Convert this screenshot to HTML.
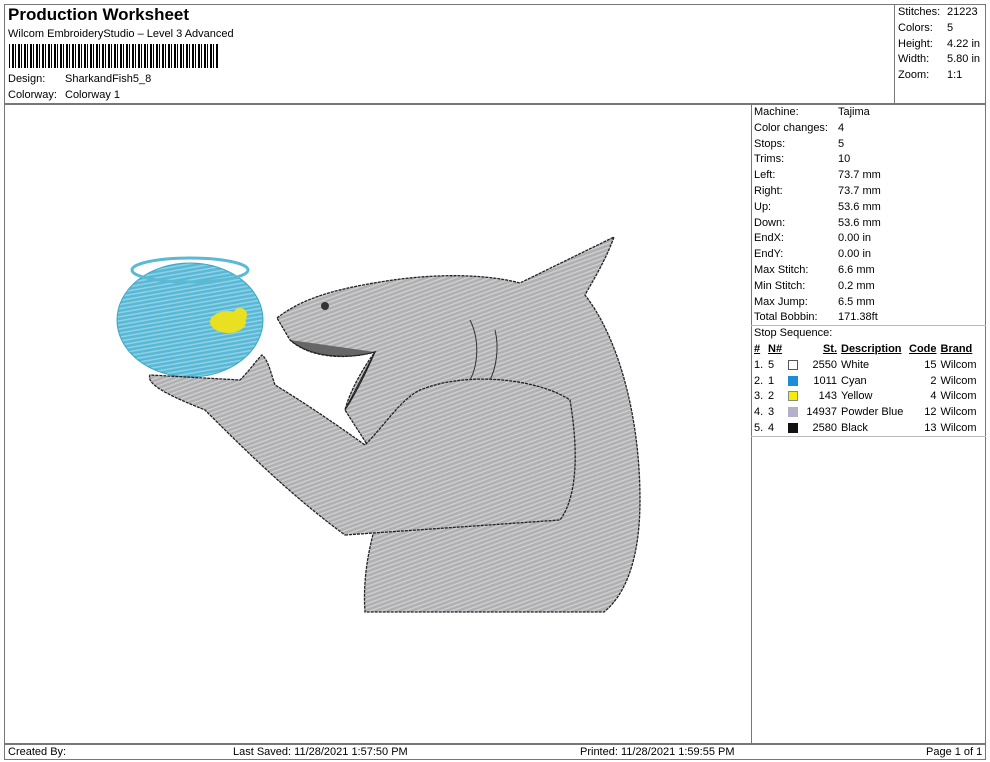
<!DOCTYPE html>
<html><head><meta charset="utf-8"><style>
*{margin:0;padding:0;box-sizing:border-box}
body{width:990px;height:762px;background:#fff;font-family:"Liberation Sans",Arial,sans-serif;font-size:11px;color:#000;position:relative;overflow:hidden}
.a{position:absolute;white-space:nowrap}
.ln{position:absolute;background:#777}
.bar{position:absolute;left:9px;top:44px;width:210px;height:24px;background:repeating-linear-gradient(90deg,#000 0 1px,#fff 1px 3px,#000 3px 5px,#fff 5px 6px,#000 6px 7px,#fff 7px 9px,#000 9px 11px,#fff 11px 12px)}
table{border-collapse:collapse}
td{padding:0;height:15.8px;line-height:15.8px}
</style></head><body>
<div class="ln" style="left:4px;top:4px;width:982px;height:1px"></div>
<div class="ln" style="left:4px;top:4px;width:1px;height:756px"></div>
<div class="ln" style="left:985px;top:4px;width:1px;height:756px"></div>
<div class="ln" style="left:4px;top:759px;width:982px;height:1px"></div>
<div class="ln" style="left:4px;top:103px;width:982px;height:2px"></div>
<div class="ln" style="left:894px;top:4px;width:1px;height:100px"></div>
<div class="ln" style="left:751px;top:104px;width:1px;height:640px"></div>
<div class="ln" style="left:751px;top:325px;width:235px;height:1px;background:#bbb"></div>
<div class="ln" style="left:751px;top:436px;width:235px;height:1px;background:#bbb"></div>
<div class="ln" style="left:4px;top:743px;width:982px;height:2px"></div>

<div class="a" style="left:8px;top:5px;font-size:17px;font-weight:bold">Production Worksheet</div>
<div class="a" style="left:8px;top:28px">Wilcom EmbroideryStudio – Level 3 Advanced</div>
<div class="bar"></div>
<div class="a" style="left:8px;top:73px">Design:</div><div class="a" style="left:65px;top:73px">SharkandFish5_8</div>
<div class="a" style="left:8px;top:89px">Colorway:</div><div class="a" style="left:65px;top:89px">Colorway 1</div>

<table class="a" style="left:898px;top:5px">
<tr><td style="width:49px">Stitches:</td><td>21223</td></tr>
<tr><td>Colors:</td><td>5</td></tr>
<tr><td>Height:</td><td>4.22 in</td></tr>
<tr><td>Width:</td><td>5.80 in</td></tr>
<tr><td>Zoom:</td><td>1:1</td></tr>
</table>

<table class="a" style="left:754px;top:105px">
<tr><td style="width:84px">Machine:</td><td>Tajima</td></tr>
<tr><td>Color changes:</td><td>4</td></tr>
<tr><td>Stops:</td><td>5</td></tr>
<tr><td>Trims:</td><td>10</td></tr>
<tr><td>Left:</td><td>73.7 mm</td></tr>
<tr><td>Right:</td><td>73.7 mm</td></tr>
<tr><td>Up:</td><td>53.6 mm</td></tr>
<tr><td>Down:</td><td>53.6 mm</td></tr>
<tr><td>EndX:</td><td>0.00 in</td></tr>
<tr><td>EndY:</td><td>0.00 in</td></tr>
<tr><td>Max Stitch:</td><td>6.6 mm</td></tr>
<tr><td>Min Stitch:</td><td>0.2 mm</td></tr>
<tr><td>Max Jump:</td><td>6.5 mm</td></tr>
<tr><td>Total Bobbin:</td><td>171.38ft</td></tr>
<tr><td>Stop Sequence:</td><td></td></tr>
</table>

<table class="a" style="left:754px;top:342px">
<tr style="font-weight:bold;text-decoration:underline"><td style="width:14px">#</td><td style="width:20px">N#</td><td style="width:14px"></td><td style="width:35px;text-align:right">St.</td><td style="width:72px;padding-left:4px">Description</td><td style="width:27px;text-align:right">Code</td><td style="padding-left:4px">Brand</td></tr>
<tr><td>1.</td><td>5</td><td><span style="display:inline-block;width:10px;height:10px;border:1px solid #555;background:#fff;vertical-align:middle"></span></td><td style="text-align:right">2550</td><td style="padding-left:4px">White</td><td style="text-align:right">15</td><td style="padding-left:4px">Wilcom</td></tr>
<tr><td>2.</td><td>1</td><td><span style="display:inline-block;width:10px;height:10px;background:#1a8fd6;vertical-align:middle"></span></td><td style="text-align:right">1011</td><td style="padding-left:4px">Cyan</td><td style="text-align:right">2</td><td style="padding-left:4px">Wilcom</td></tr>
<tr><td>3.</td><td>2</td><td><span style="display:inline-block;width:10px;height:10px;background:#f2ef00;border:1px solid #888;vertical-align:middle"></span></td><td style="text-align:right">143</td><td style="padding-left:4px">Yellow</td><td style="text-align:right">4</td><td style="padding-left:4px">Wilcom</td></tr>
<tr><td>4.</td><td>3</td><td><span style="display:inline-block;width:10px;height:10px;background:#b4b0cc;vertical-align:middle"></span></td><td style="text-align:right">14937</td><td style="padding-left:4px">Powder Blue</td><td style="text-align:right">12</td><td style="padding-left:4px">Wilcom</td></tr>
<tr><td>5.</td><td>4</td><td><span style="display:inline-block;width:10px;height:10px;background:#111;vertical-align:middle"></span></td><td style="text-align:right">2580</td><td style="padding-left:4px">Black</td><td style="text-align:right">13</td><td style="padding-left:4px">Wilcom</td></tr>
</table>

<svg class="a" style="left:0;top:0" width="750" height="740" viewBox="0 0 750 740">
<defs><pattern id="st" width="4" height="4" patternUnits="userSpaceOnUse" patternTransform="rotate(70)"><rect width="4" height="4" fill="#b0b0b3"/><rect width="1.4" height="4" fill="#cfcfd1"/></pattern>
<pattern id="bl" width="4" height="4" patternUnits="userSpaceOnUse" patternTransform="rotate(-10)"><rect width="4" height="4" fill="#58b8d6"/><rect width="4" height="1.5" fill="#8fd2e6"/></pattern></defs>
<ellipse cx="190" cy="320" rx="73" ry="57" fill="url(#bl)" stroke="#3aa6c8" stroke-width="1"/>
<ellipse cx="190" cy="270" rx="58" ry="12" fill="none" stroke="#5ab9d5" stroke-width="3"/>
<ellipse cx="228" cy="322" rx="18" ry="11" fill="#e8e020"/>
<circle cx="240" cy="315" r="7" fill="#e8e020"/>
<path d="M277,318 C300,300 330,290 380,282 C440,272 490,275 520,283 L614,237 C605,262 592,282 585,295 C620,340 640,420 640,500 C640,560 625,595 604,612 L365,612 C362,570 372,530 390,480 L345,410 C350,390 365,365 375,352 C345,360 310,358 290,340 Z" fill="url(#st)" stroke="#222" stroke-width="1.3" stroke-dasharray="3 1"/>
<path d="M290,340 C310,357 345,360 375,352 L345,410 C355,395 365,375 375,352" fill="#666" stroke="#222"/>
<path d="M345,535 L560,520 C575,500 580,460 570,400 C540,380 470,370 420,390 C400,400 385,425 365,445 C330,420 300,400 275,385 C270,370 268,360 262,355 C255,362 250,370 240,380 L150,375 C145,385 175,398 205,410 C240,445 290,495 345,535 Z" fill="url(#st)" stroke="#222" stroke-width="1.3" stroke-dasharray="3 1"/>
<circle cx="325" cy="306" r="4" fill="#333"/>
<path d="M470,320 C480,340 478,365 470,380 M495,330 C500,350 495,370 490,380" fill="none" stroke="#333"/>
</svg>

<div class="a" style="left:8px;top:746px">Created By:</div>
<div class="a" style="left:233px;top:746px">Last Saved: 11/28/2021 1:57:50 PM</div>
<div class="a" style="left:580px;top:746px">Printed: 11/28/2021 1:59:55 PM</div>
<div class="a" style="left:926px;top:746px">Page 1 of 1</div>
</body></html>
